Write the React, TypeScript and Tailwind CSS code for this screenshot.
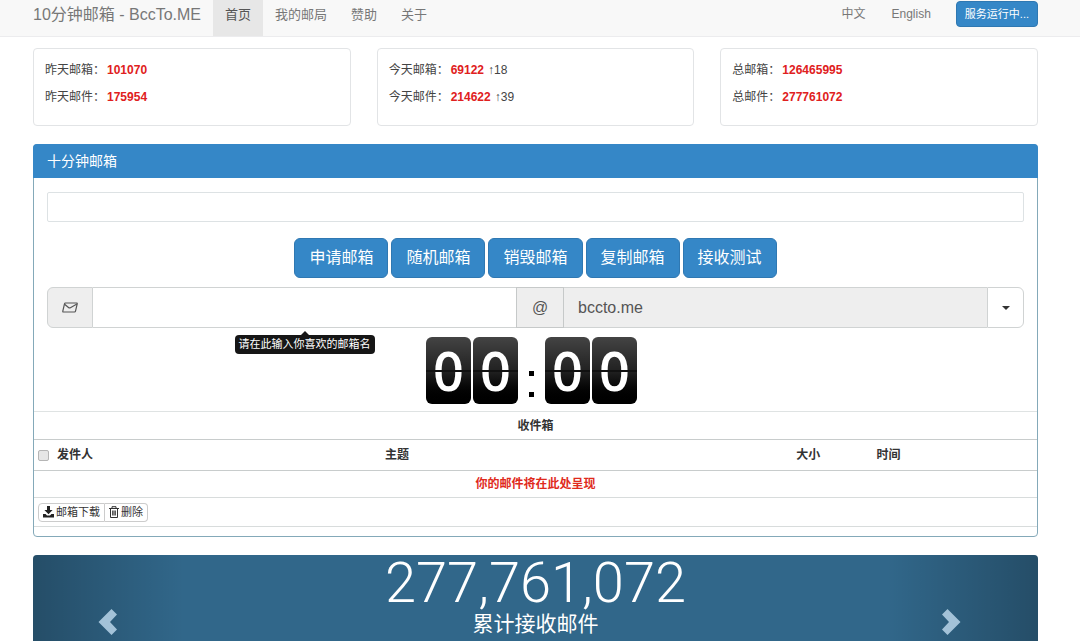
import React, { useState } from "react";

const stats = [
  [
    { label: "昨天邮箱：", value: "101070" },
    { label: "昨天邮件：", value: "175954" },
  ],
  [
    { label: "今天邮箱：", value: "69122", delta: "↑18" },
    { label: "今天邮件：", value: "214622", delta: "↑39" },
  ],
  [
    { label: "总邮箱：", value: "126465995" },
    { label: "总邮件：", value: "277761072" },
  ],
];

const navItems = ["首页", "我的邮局", "赞助", "关于"];
const actions = ["申请邮箱", "随机邮箱", "销毁邮箱", "复制邮箱", "接收测试"];

const EnvelopeIcon = () => (
  <svg width="16" height="11" viewBox="0 0 16 11" fill="none" stroke="#555" strokeWidth="1.2" strokeLinejoin="round">
    <path d="M3.4 1h11.2q.8 0 .6.8l-1.7 7.4q-.2.8-1 .8H1.4q-.8 0-.6-.8l1.7-7.4q.2-.8.9-.8z" />
    <path d="M2.6 2.200l4.200 3.500q.7.5 1.600 0l6.500-3.700" />
  </svg>
);

const DownloadIcon = () => (
  <svg width="11" height="12" viewBox="0 0 11 12" fill="#222">
    <path d="M4 0h3v4h2.600L5.500 8.300 1.400 4H4z" />
    <path d="M0 8h2.600l1.400 1.500h3L8.400 8H11v3.500H0z" />
  </svg>
);

const TrashIcon = () => (
  <svg width="10" height="12" viewBox="0 0 10 12" fill="none" stroke="#333">
    <path d="M0 2.500h10M3 2.500V.7h4v1.800M1.500 2.500v9h7v-9M3.700 4.500v5M5 4.500v5M6.300 4.500v5" strokeWidth="1" />
  </svg>
);

const ChevronIcon = ({ flip }: { flip?: boolean }) => (
  <svg width="20" height="28" viewBox="0 0 20 28" fill="#a3c2d8" className={flip ? "rotate-180" : ""}>
    <path d="M13.500 1L19 6.500 12 14l7 7.500-5.500 5.500L.5 14z" />
  </svg>
);

const Digit = ({ value }: { value: string }) => (
  <div className="relative flex h-[67px] w-[45px] items-center justify-center rounded-md bg-linear-to-b from-[#444] via-[#222] to-black">
    <span className="font-['Open_Sans',sans-serif] text-[54px] leading-[67px] font-semibold text-white">
      {value}
    </span>
    <span className="absolute inset-x-0 top-[33px] h-[2px] bg-[#111]" />
  </div>
);

const Navbar = () => (
  <header className="h-[37px] border-b border-[#ececee] bg-[#f8f8f8] pr-[42px] pl-[33px] text-[#777]">
    <nav className="flex h-full items-start justify-between">
      <div className="flex h-full">
        <a href="#" className="mr-3 text-base leading-[29px] whitespace-nowrap text-[#777]">
          10分钟邮箱 - BccTo.ME
        </a>
        {navItems.map((item, i) => (
          <a
            key={item}
            href="#"
            className={`h-full px-3 text-[13px] leading-[29px] ${i === 0 ? "bg-[#e7e7e7] text-[#555]" : ""}`}
          >
            {item}
          </a>
        ))}
      </div>
      <div className="flex">
        <a href="#" className="px-[13px] text-xs leading-[29px]">
          中文
        </a>
        <a href="#" className="px-[13px] text-xs leading-[29px]">
          English
        </a>
        <button className="mt-px ml-3 h-[26px] rounded-sm border border-[#2f78b2] bg-[#3587c7] px-2 text-[11px] text-white">
          服务运行中...
        </button>
      </div>
    </nav>
  </header>
);

const StatCards = () => (
  <section className="grid grid-cols-3 gap-[26px]">
    {stats.map((card, i) => (
      <div key={i} className="h-[78px] rounded-sm border border-[#e2e4e6] px-[11px] pt-2 text-xs text-[#444]">
        {card.map((row) => (
          <p key={row.label} className="flex gap-[2px] leading-[27px]">
            <span>{row.label}</span>
            <b className="mr-[2px] text-[#e02020]">{row.value}</b>
            {"delta" in row && <span>{row.delta}</span>}
          </p>
        ))}
      </div>
    ))}
  </section>
);

const AddressBar = () => {
  const [name, setName] = useState("");
  return (
    <div className="mt-[9px] flex h-[41px] text-base text-[#555]">
      <label
        htmlFor="mail-name"
        className="flex w-[46px] items-center justify-center rounded-l-md border border-[#d0d3d3] bg-[#eee]"
      >
        <EnvelopeIcon />
      </label>
      <div className="relative flex-1">
        <input
          id="mail-name"
          aria-label="邮箱名"
          className="h-full w-full border-y border-[#d0d3d3] px-3 outline-none"
          value={name}
          onChange={(e) => setName(e.target.value)}
        />
        <div
          role="tooltip"
          className="absolute top-full left-1/2 mt-[7px] -translate-x-1/2 rounded-sm bg-[#161616] px-1 text-[11px] leading-[19px] whitespace-nowrap text-white"
        >
          <span className="absolute -top-1 left-1/2 h-0 w-0 -translate-x-1/2 border-x-4 border-b-4 border-x-transparent border-b-[#161616]" />
          请在此输入你喜欢的邮箱名
        </div>
      </div>
      <span className="flex w-[48px] items-center justify-center border border-[#c6c9c9] bg-[#eee]">@</span>
      <div className="flex-1">
        <input
          aria-label="域名"
          readOnly
          value="bccto.me"
          className="h-full w-full border-y border-[#d0d3d3] bg-[#eee] px-3.5 outline-none"
        />
      </div>
      <button
        aria-label="选择域名"
        className="flex w-[37px] items-center justify-center rounded-r-md border border-[#d0d3d3] bg-white"
      >
        <span className="h-0 w-0 border-x-4 border-t-4 border-x-transparent border-t-[#333]" />
      </button>
    </div>
  );
};

const Inbox = () => (
  <table className="mb-[9px] w-full table-fixed border-collapse text-left text-xs text-[#333]">
    <colgroup>
      <col className="w-[19px]" />
      <col className="w-[32.7%]" />
      <col className="w-[41%]" />
      <col className="w-[8%]" />
      <col />
    </colgroup>
    <thead>
      <tr className="h-7 border-t border-[#dfe3e3]">
        <th colSpan={5} className="text-center">
          收件箱
        </th>
      </tr>
      <tr className="h-[31px] border-y border-[#c8cccc]">
        <th className="pl-1">
          <input
            type="checkbox"
            aria-label="全选"
            className="block h-[11px] w-[11px] appearance-none rounded-xs border border-[#b5b5b5] bg-[#e6e6e6]"
          />
        </th>
        <th className="px-1">发件人</th>
        <th className="px-1">主题</th>
        <th className="px-1">大小</th>
        <th className="px-1">时间</th>
      </tr>
    </thead>
    <tbody>
      <tr className="h-[27px] border-b border-[#d8dcdc]">
        <td colSpan={5} className="text-center font-bold text-[#e02a1c]">
          你的邮件将在此处呈现
        </td>
      </tr>
      <tr className="h-[29px] border-b border-[#d8dcdc]">
        <td colSpan={5} className="pl-1">
          <div className="flex text-[11px] leading-[17px]">
            <button className="flex items-center gap-[2px] rounded-l-sm border border-[#ccc] bg-white px-1">
              <DownloadIcon />
              邮箱下载
            </button>
            <button className="flex items-center gap-[2px] rounded-r-sm border border-l-0 border-[#ccc] bg-white px-1">
              <TrashIcon />
              删除
            </button>
          </div>
        </td>
      </tr>
    </tbody>
  </table>
);

const App = () => {
  return (
    <div className="bg-white font-['Liberation_Sans','Noto_Sans_CJK_SC',sans-serif]">
      <Navbar />
      <main className="pt-[11px] pr-[42px] pl-[33px]">
        <StatCards />

        <section className="mt-[18px] rounded-sm border border-[#84a9b9]">
          <h2 className="-mx-px -mt-px rounded-t-sm bg-[#3587c7] px-3.5 text-sm leading-[34px] text-white">
            十分钟邮箱
          </h2>
          <div className="px-[13px] pt-[14px] pb-[7px]">
            <input
              aria-label="当前邮箱"
              readOnly
              className="block h-[30px] w-full rounded-xs border border-[#dde2e4] px-3 text-sm outline-none"
            />
            <div className="mt-4 flex justify-center gap-[3px]">
              {actions.map((action) => (
                <button
                  key={action}
                  className="h-10 rounded-md border border-[#2f78b2] bg-[#3587c7] px-[14px] text-base text-white"
                >
                  {action}
                </button>
              ))}
            </div>
            <AddressBar />
            {/* countdown */}
            <div className="mt-[9px] flex justify-center gap-[2px] pr-2">
              <Digit value="0" />
              <Digit value="0" />
              <div className="flex w-[23px] flex-col items-center gap-4 pt-[34px]">
                <span className="h-[5px] w-[5px] bg-black" />
                <span className="h-[5px] w-[5px] bg-black" />
              </div>
              <Digit value="0" />
              <Digit value="0" />
            </div>
          </div>
          <Inbox />
        </section>

        {/* carousel */}
        <section className="mt-[18px] flex h-[86px] justify-between rounded-t-sm bg-[#31678a] text-white">
          <button
            aria-label="上一张"
            className="flex w-[15%] items-end justify-center rounded-tl-sm bg-linear-to-r from-black/25 to-transparent pb-[5px]"
          >
            <ChevronIcon />
          </button>
          <div className="text-center">
            <p className="font-['Roboto',sans-serif] text-[56px] leading-[57px] font-light">277,761,072</p>
            <p className="text-[21px] leading-[24px]">累计接收邮件</p>
          </div>
          <button
            aria-label="下一张"
            className="flex w-[15%] items-end justify-center rounded-tr-sm bg-linear-to-l from-black/25 to-transparent pr-6 pb-[5px]"
          >
            <ChevronIcon flip />
          </button>
        </section>
      </main>
    </div>
  );
};

export default App;
